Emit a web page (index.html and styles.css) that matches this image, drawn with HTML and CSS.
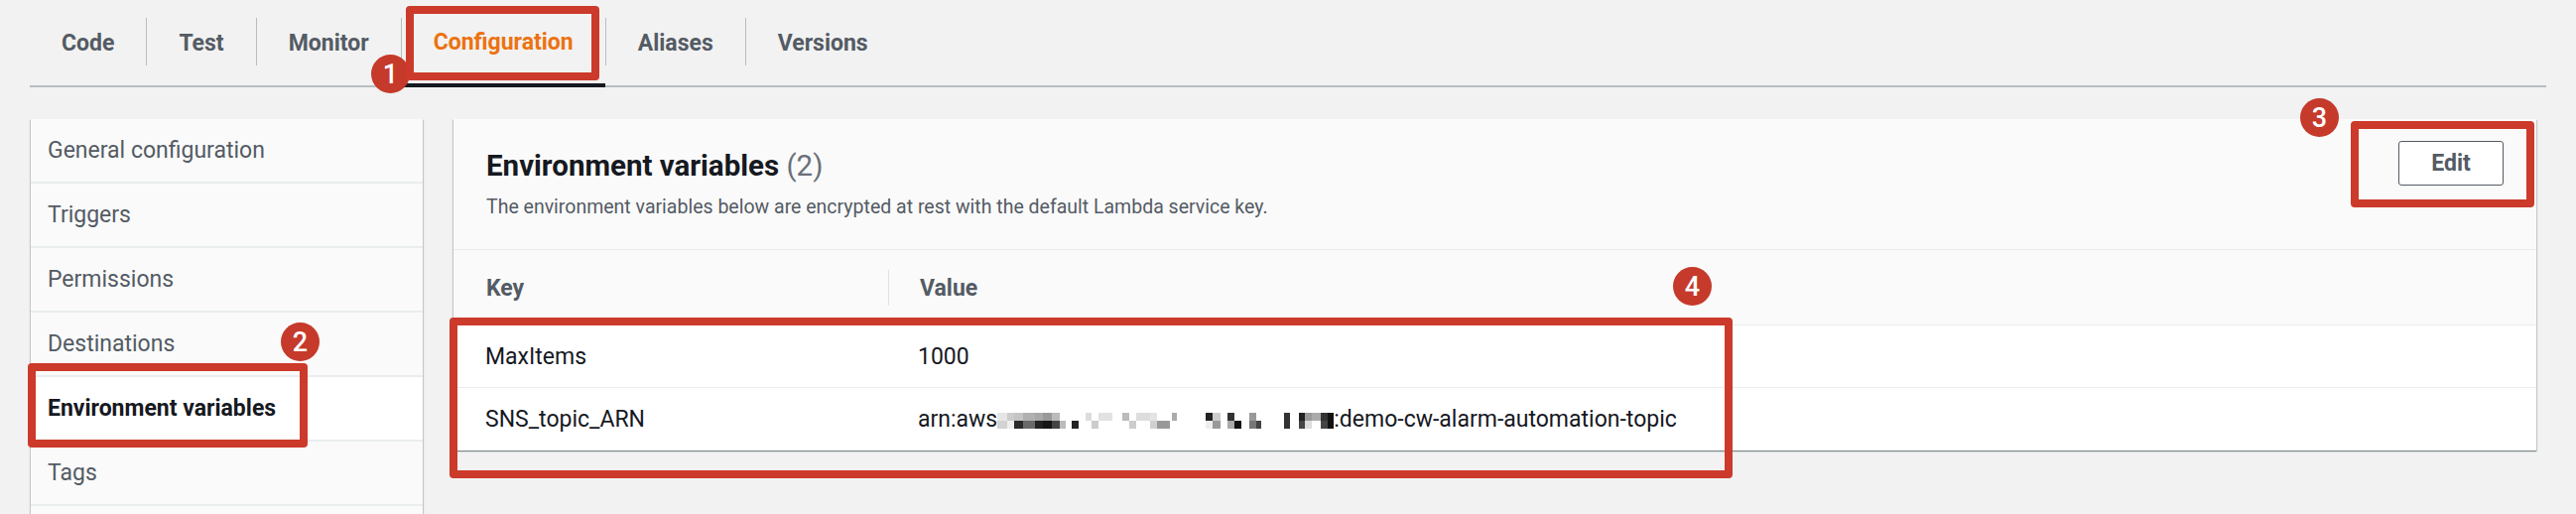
FILE: index.html
```html
<!DOCTYPE html>
<html lang="en">
<head>
<meta charset="utf-8">
<title>Lambda configuration - Environment variables</title>
<link rel="stylesheet" href="styles.css">
</head>
<body>
<div class="page">
  <nav class="tabs">
    <div class="tab">Code</div>
    <span class="sep"></span>
    <div class="tab">Test</div>
    <span class="sep"></span>
    <div class="tab">Monitor</div>
    <span class="sep"></span>
    <div class="tab active">Configuration</div>
    <span class="sep"></span>
    <div class="tab">Aliases</div>
    <span class="sep"></span>
    <div class="tab">Versions</div>
  </nav>

  <div class="content">
    <aside class="sidebar">
      <div class="side-item">General configuration</div>
      <div class="side-item">Triggers</div>
      <div class="side-item">Permissions</div>
      <div class="side-item">Destinations</div>
      <div class="side-item active">Environment variables</div>
      <div class="side-item">Tags</div>
      <div class="side-item side-empty"></div>
    </aside>

    <section class="panel">
      <header class="panel-head">
        <div class="head-text">
          <h2 class="title">Environment variables <span class="count">(2)</span></h2>
          <p class="desc">The environment variables below are encrypted at rest with the default Lambda service key.</p>
        </div>
        <button class="btn">Edit</button>
      </header>
      <div class="thead">
        <div class="th th-key">Key</div>
        <div class="th th-val">Value</div>
      </div>
      <div class="row">
        <div class="td td-key">MaxItems</div>
        <div class="td td-val">1000</div>
      </div>
      <div class="row">
        <div class="td td-key">SNS_topic_ARN</div>
        <div class="td td-val">arn:aws<svg class="mosaic" width="339" height="16" viewBox="0 0 331 16" preserveAspectRatio="none" shape-rendering="crispEdges">
            <rect x="0" y="0" width="10" height="8" fill="#e6e6e6"/><rect x="0" y="8" width="10" height="8" fill="#d2d2d2"/>
            <rect x="10" y="0" width="7" height="8" fill="#cccccc"/><rect x="10" y="8" width="7" height="8" fill="#efefef"/>
            <rect x="17" y="0" width="8" height="8" fill="#c4c4c4"/><rect x="17" y="8" width="8" height="8" fill="#2a2a2a"/>
            <rect x="25" y="0" width="12" height="8" fill="#b0b0b0"/><rect x="25" y="8" width="12" height="8" fill="#6a6a6a"/>
            <rect x="37" y="0" width="8" height="8" fill="#a8a8a8"/><rect x="37" y="8" width="8" height="8" fill="#222222"/>
            <rect x="45" y="0" width="9" height="8" fill="#999999"/><rect x="45" y="8" width="9" height="8" fill="#151515"/>
            <rect x="54" y="0" width="8" height="8" fill="#bbbbbb"/><rect x="54" y="8" width="8" height="8" fill="#444444"/>
            <rect x="62" y="8" width="5" height="8" fill="#bbbbbb"/>
            <rect x="73" y="8" width="7" height="8" fill="#222222"/>
            <rect x="87" y="0" width="6" height="8" fill="#dddddd"/>
            <rect x="93" y="8" width="7" height="8" fill="#cccccc"/>
            <rect x="100" y="0" width="13" height="8" fill="#e2e2e2"/>
            <rect x="123" y="0" width="7" height="8" fill="#bbbbbb"/><rect x="130" y="8" width="7" height="8" fill="#cccccc"/>
            <rect x="137" y="0" width="13" height="8" fill="#dddddd"/>
            <rect x="150" y="0" width="7" height="8" fill="#e4e4e4"/><rect x="150" y="8" width="7" height="8" fill="#d0d0d0"/>
            <rect x="157" y="8" width="13" height="8" fill="#999999"/>
            <rect x="172" y="0" width="5" height="8" fill="#aaaaaa"/>
            <rect x="205" y="0" width="7" height="8" fill="#222222"/><rect x="205" y="8" width="7" height="8" fill="#eeeeee"/>
            <rect x="212" y="0" width="8" height="8" fill="#cccccc"/><rect x="212" y="8" width="8" height="8" fill="#999999"/>
            <rect x="227" y="0" width="6" height="8" fill="#333333"/><rect x="227" y="8" width="6" height="8" fill="#aaaaaa"/>
            <rect x="233" y="8" width="7" height="8" fill="#111111"/>
            <rect x="248" y="0" width="7" height="8" fill="#999999"/><rect x="248" y="8" width="7" height="8" fill="#777777"/>
            <rect x="255" y="8" width="5" height="8" fill="#444444"/>
            <rect x="282" y="0" width="6" height="16" fill="#333333"/>
            <rect x="297" y="0" width="6" height="8" fill="#222222"/><rect x="297" y="8" width="6" height="8" fill="#444444"/>
            <rect x="303" y="0" width="7" height="8" fill="#999999"/><rect x="303" y="8" width="7" height="8" fill="#dddddd"/>
            <rect x="310" y="0" width="8" height="8" fill="#aaaaaa"/>
            <rect x="318" y="0" width="7" height="8" fill="#333333"/><rect x="318" y="8" width="7" height="8" fill="#444444"/>
            <rect x="325" y="0" width="6" height="16" fill="#111111"/>
          </svg>:demo-cw-alarm-automation-topic</div>
      </div>
    </section>
  </div>

  <div class="badge b1">1</div>
  <div class="mark m1"></div>
  <div class="badge b2">2</div>
  <div class="mark m2"></div>
  <div class="badge b3">3</div>
  <div class="mark m3"></div>
  <div class="badge b4">4</div>
  <div class="mark m4"></div>
</div>
</body>
</html>
```

FILE: styles.css
```css
* { box-sizing: border-box; }

html, body {
  margin: 0;
  padding: 0;
  background: #f2f2f2;
  font-family: Roboto, "Liberation Sans", Arial, sans-serif;
  color: #16191f;
}

.page {
  position: relative;
  width: 2596px;
  min-height: 518px;
}

/* ---------- Tabs ---------- */
.tabs {
  display: flex;
  align-items: flex-start;
  margin: 0 30px;
  height: 88px;
  border-bottom: 2px solid #b6bec0;
}

.tab {
  height: 86px;
  padding: 0 32px;
  display: flex;
  align-items: center;
  font-size: 23px;
  font-weight: 700;
  color: #545b64;
}

.tab.active {
  height: 88px;
  border-bottom: 4px solid #16191f;
  color: #ec7211;
}

.sep {
  width: 1px;
  height: 48px;
  margin-top: 18px;
  background: #b6bec0;
}

/* ---------- Content ---------- */
.content {
  display: flex;
  align-items: flex-start;
  gap: 31px;
  padding: 32px 40px 0 31px;
}

.sidebar {
  width: 395px;
  flex: none;
  background: #fafafa;
  box-shadow: 0 1px 1px 0 rgba(0, 28, 36, 0.3), 1px 1px 1px 0 rgba(0, 28, 36, 0.15), -1px 1px 1px 0 rgba(0, 28, 36, 0.15);
}

.side-item {
  height: 65px;
  padding-left: 17px;
  display: flex;
  align-items: center;
  font-size: 23px;
  color: #545b64;
  border-bottom: 2px solid #eaeded;
  white-space: nowrap;
}

.side-item.active {
  background: #ffffff;
  color: #16191f;
  font-weight: 700;
}

/* ---------- Panel ---------- */
.panel {
  flex: 1;
  background: #fafafa;
  box-shadow: 0 1px 1px 0 rgba(0, 28, 36, 0.3), 1px 1px 1px 0 rgba(0, 28, 36, 0.15), -1px 1px 1px 0 rgba(0, 28, 36, 0.15);
}

.panel-head {
  display: flex;
  justify-content: space-between;
  align-items: flex-start;
  height: 132px;
  padding: 22px 33px 0 33px;
  border-bottom: 1px solid #eaeded;
}

.head-text {
  padding-top: 7px;
}

.title {
  margin: 0;
  font-size: 29.5px;
  line-height: 36px;
  font-weight: 700;
  color: #16191f;
}

.count {
  font-weight: 400;
  color: #687078;
}

.desc {
  margin: 11px 0 0;
  font-size: 19.5px;
  line-height: 26px;
  color: #545b64;
}

.btn {
  width: 106px;
  height: 45px;
  background: #ffffff;
  border: 1px solid #545b64;
  border-radius: 3px;
  font-family: inherit;
  font-size: 23px;
  font-weight: 700;
  color: #545b64;
  padding: 0;
}

.thead {
  display: grid;
  grid-template-columns: 438px 1fr;
  padding: 20px 0 19px;
  border-bottom: 1px solid #eaeded;
}

.th {
  height: 36px;
  display: flex;
  align-items: center;
  font-size: 23px;
  font-weight: 700;
  color: #545b64;
}

.th-key { padding-left: 33px; }
.th-val { padding-left: 31px; border-left: 1px solid #e1e4e4; }

.row {
  display: grid;
  grid-template-columns: 438px 1fr;
  height: 63px;
  background: #ffffff;
  border-bottom: 1px solid #eaeded;
}

.row:last-child { border-bottom: none; }

.td {
  display: flex;
  align-items: center;
  font-size: 23px;
  color: #16191f;
  white-space: nowrap;
}

.td-key { padding-left: 32px; }
.td-val { padding-left: 30px; }

.mosaic {
  display: block;
  flex: none;
  margin-top: 2px;
}

/* ---------- Annotations (overlay) ---------- */
.badge {
  position: absolute;
  width: 39px;
  height: 39px;
  border-radius: 50%;
  background: #c53a2b;
  color: #ffffff;
  font-size: 27px;
  font-weight: 500;
  display: flex;
  align-items: center;
  justify-content: center;
}

.b1 { left: 374px; top: 55px; }
.b2 { left: 283px; top: 325px; }
.b3 { left: 2318px; top: 99px; }
.b4 { left: 1686px; top: 269px; }

.mark {
  position: absolute;
  border: 8px solid #cc3a2b;
  border-radius: 4px;
}

.m1 { left: 409px; top: 6px; width: 195px; height: 75px; }
.m2 { left: 28px; top: 366px; width: 282px; height: 85px; }
.m3 { left: 2369px; top: 122px; width: 185px; height: 87px; }
.m4 { left: 453px; top: 320px; width: 1293px; height: 162px; }
```
